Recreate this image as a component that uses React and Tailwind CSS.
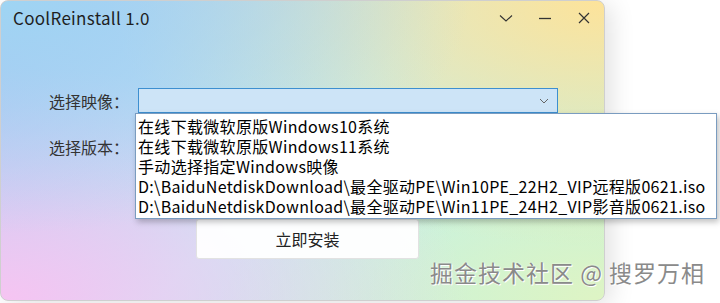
import React from 'react';

const items = [
  '在线下载微软原版Windows10系统',
  '在线下载微软原版Windows11系统',
  '手动选择指定Windows映像',
  'D:\\BaiduNetdiskDownload\\最全驱动PE\\Win10PE_22H2_VIP远程版0621.iso',
  'D:\\BaiduNetdiskDownload\\最全驱动PE\\Win11PE_24H2_VIP影音版0621.iso',
];

const font = { fontFamily: '"Noto Sans CJK SC", "Noto Sans", sans-serif' };

const App = () => {
  return (
    <div className="relative w-[720px] h-[303px] bg-white overflow-hidden" style={font}>
      {/* Window */}
      <div className="relative w-[605px] h-[301px] rounded-lg border border-[#cfcfcf] shadow-[6px_4px_24px_rgba(0,0,0,0.12)] bg-[radial-gradient(ellipse_at_0%_0%,#9fd5f3_0%,transparent_55%),radial-gradient(ellipse_at_100%_0%,#fde39a_0%,transparent_58%),radial-gradient(ellipse_at_0%_100%,#f6c4f2_0%,transparent_55%),radial-gradient(ellipse_at_100%_100%,#def4c4_0%,transparent_45%),linear-gradient(135deg,#b0bcf2_0%,#c2eef4_50%,#bff3dc_100%)]">
        {/* Title bar */}
        <div className="flex items-center h-[34px] pl-[12px]">
          <span className="text-[17px] text-[#1f1f1f] tracking-[0.3px]">CoolReinstall 1.0</span>
          <div className="ml-auto flex items-center">
            <div className="w-[39px] h-[32px] flex items-center justify-center">
              <svg width="14" height="10" viewBox="0 0 14 10"><path d="M1 2.5 L7 8 L13 2.5" fill="none" stroke="#333" strokeWidth="1.1" /></svg>
            </div>
            <div className="w-[39px] h-[32px] flex items-center justify-center">
              <svg width="14" height="10" viewBox="0 0 14 10"><path d="M1 5.5 H13" fill="none" stroke="#333" strokeWidth="1.3" /></svg>
            </div>
            <div className="w-[39px] h-[32px] flex items-center justify-center mr-[1px]">
              <svg width="12" height="12" viewBox="0 0 12 12"><path d="M1 1 L11 11 M11 1 L1 11" fill="none" stroke="#333" strokeWidth="1.2" /></svg>
            </div>
          </div>
        </div>

        {/* Form */}
        <div className="flex items-center mt-[53px] pl-[48px]">
          <span className="w-[89px] text-[16px] text-[#333]">选择映像：</span>
          <div className="w-[420px] h-[25px] bg-[#cde4f7] border border-[#3d8fd0] flex items-center justify-end pr-[8px]">
            <svg width="10" height="6" viewBox="0 0 10 6"><path d="M1 1 L5 5 L9 1" fill="none" stroke="#666" strokeWidth="1" /></svg>
          </div>
        </div>
        <div className="flex items-center mt-[22px] pl-[48px]">
          <span className="text-[16px] text-[#333]">选择版本：</span>
        </div>

        <div className="flex mt-[60px] pl-[195px]">
          <button className="w-[223px] h-[40px] bg-white/95 border border-[#e2e2e2] rounded-[3px] text-[16px] text-[#222]">立即安装</button>
        </div>
      </div>

      {/* Dropdown list */}
      <div className="absolute left-[135px] top-[113px] w-[582px] bg-white border border-[#7a9cc0] shadow-[2px_3px_6px_rgba(0,0,0,0.25)] py-[2px]">
        {items.map((t) => (
          <div key={t} className="h-[20px] leading-[20px] pl-[2px] text-[16px] text-[#000] tracking-[0.32px] whitespace-nowrap">{t}</div>
        ))}
      </div>

      {/* Watermark */}
      <div className="absolute left-[430px] top-[255px] text-[23px] text-[#8a8a8a] tracking-[1px] [text-shadow:0_0_2px_#fff,1px_1px_0_#fff]">
        掘金技术社区 @ 搜罗万相
      </div>
    </div>
  );
};

export default App;
